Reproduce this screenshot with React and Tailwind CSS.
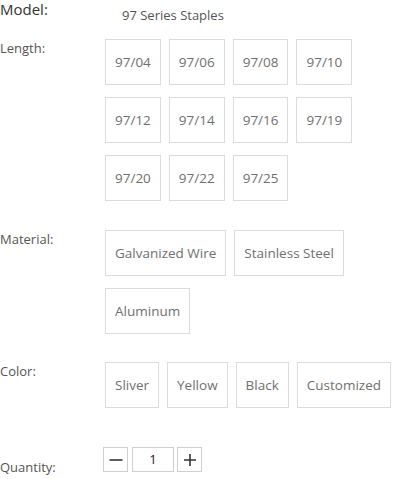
import React from "react";

const font = { fontFamily: '"Open Sans", "Noto Sans", sans-serif' };

function Opt({ children }) {
  return (
    <div className="border border-[#dcdcdc] px-[9px] py-[10px] text-[13.5px] leading-6 text-[#707070] bg-white">
      {children}
    </div>
  );
}

function Row({ label, items, className }) {
  return (
    <div className={"flex " + (className || "")}>
      <div className="w-[105px] shrink-0 text-[13px] leading-4 pt-[1px] text-[#555]">{label}</div>
      <div className="flex flex-wrap gap-x-2 gap-y-3 w-[290px]">
        {items.map((t) => (
          <Opt key={t}>{t}</Opt>
        ))}
      </div>
    </div>
  );
}

export default function App() {
  return (
    <div className="w-[400px] h-[479px] bg-white overflow-hidden" style={font}>
      <div className="flex">
        <div className="w-[105px] shrink-0 text-[15px] leading-[18px] text-[#333]">Model:</div>
        <div className="pl-[17px] pt-[6px] text-[13px] leading-[18px] text-[#555]">97 Series Staples</div>
      </div>
      <Row
        className="mt-[15px]"
        label="Length:"
        items={["97/04", "97/06", "97/08", "97/10", "97/12", "97/14", "97/16", "97/19", "97/20", "97/22", "97/25"]}
      />
      <Row
        className="mt-[29px]"
        label="Material:"
        items={["Galvanized Wire", "Stainless Steel", "Aluminum"]}
      />
      <Row
        className="mt-[28px]"
        label="Color:"
        items={["Sliver", "Yellow", "Black", "Customized"]}
      />
      <div className="flex mt-[39px]">
        <div className="w-[103px] shrink-0 text-[13px] leading-4 pt-[12px] text-[#555]">Quantity:</div>
        <div className="flex items-start">
          <button className="w-[25px] h-[25px] border border-[#cfcfcf] flex items-center justify-center bg-white">
            <svg width="14" height="14" viewBox="0 0 14 14">
              <path d="M0.5 7H13.5" stroke="#333" strokeWidth="1.6" />
            </svg>
          </button>
          <div className="ml-[4px] w-[42px] h-[25px] border border-[#cfcfcf] flex items-center justify-center text-[13px] text-[#222]">
            1
          </div>
          <button className="ml-[3px] w-[25px] h-[25px] border border-[#cfcfcf] flex items-center justify-center bg-white">
            <svg width="14" height="14" viewBox="0 0 14 14">
              <path d="M1 7H13M7 1V13" stroke="#333" strokeWidth="1.6" />
            </svg>
          </button>
        </div>
      </div>
    </div>
  );
}
